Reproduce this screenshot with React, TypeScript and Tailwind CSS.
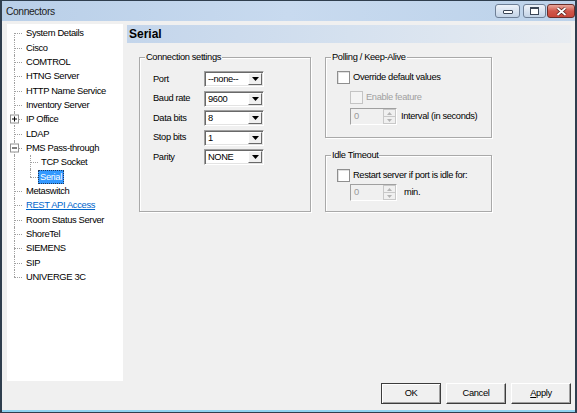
import React from 'react';

const UI = "font-['Liberation_Sans',Arial,sans-serif]";

type Node = {
  label: string;
  child?: boolean;
  box?: '+' | '-';
  selected?: boolean;
  link?: boolean;
};

const tree: Node[] = [
  { label: 'System Details' },
  { label: 'Cisco' },
  { label: 'COMTROL' },
  { label: 'HTNG Server' },
  { label: 'HTTP Name Service' },
  { label: 'Inventory Server' },
  { label: 'IP Office', box: '+' },
  { label: 'LDAP' },
  { label: 'PMS Pass-through', box: '-' },
  { label: 'TCP Socket', child: true },
  { label: 'Serial', child: true, selected: true },
  { label: 'Metaswitch' },
  { label: 'REST API Access', link: true },
  { label: 'Room Status Server' },
  { label: 'ShoreTel' },
  { label: 'SIEMENS' },
  { label: 'SIP' },
  { label: 'UNIVERGE 3C' },
];

const TreeRow: React.FC<{ node: Node; first: boolean; last: boolean; lastChild: boolean }> = ({
  node,
  first,
  last,
  lastChild,
}) => (
  <div className="relative h-[14.35px] flex items-center">
    {/* root level line */}
    <span
      className={`absolute left-[7px] border-l border-dotted border-[#a0a0a0] ${
        first ? 'top-1/2 bottom-0' : last ? 'top-0 h-1/2' : 'top-0 bottom-0'
      }`}
    />
    {node.child ? (
      <>
        <span
          className={`absolute left-[23px] border-l border-dotted border-[#a0a0a0] ${
            lastChild ? 'top-0 h-1/2' : 'top-0 bottom-0'
          }`}
        />
        <span className="absolute left-[23px] top-1/2 w-[8px] border-t border-dotted border-[#a0a0a0]" />
      </>
    ) : (
      <span className="absolute left-[7px] top-1/2 w-[8px] border-t border-dotted border-[#a0a0a0]" />
    )}
    {node.box && (
      <span className="absolute left-[3px] top-1/2 -translate-y-1/2 w-[9px] h-[9px] border border-[#919191] bg-white">
        <span className="absolute left-[1px] top-[3px] w-[5px] h-[1px] bg-black" />
        {node.box === '+' && <span className="absolute left-[3px] top-[1px] w-[1px] h-[5px] bg-black" />}
      </span>
    )}
    <span
      className={`absolute whitespace-nowrap leading-[12px] ${
        node.child ? 'left-[31px]' : 'left-[16px]'
      } ${
        node.selected
          ? 'bg-[#3399ff] text-white px-[1px] border border-dotted border-[#1f3a60]'
          : node.link
          ? 'text-[#0066cc] underline px-[2px] border border-transparent'
          : 'text-black px-[2px] border border-transparent'
      }`}
    >
      {node.label}
    </span>
  </div>
);

const GroupBox: React.FC<{ label: string; className: string; children?: React.ReactNode }> = ({
  label,
  className,
  children,
}) => (
  <div
    className={`relative border border-[#a9a9a9] shadow-[inset_1px_1px_0_#ffffff,1px_1px_0_#ffffff] ${className}`}
  >
    <span className="absolute -top-[7px] left-[5px] px-[1px] bg-[#f0f0f0] leading-[13px] whitespace-nowrap">
      {label}
    </span>
    {children}
  </div>
);

const Select: React.FC<{ value: string }> = ({ value }) => (
  <div className="w-[60px] h-[16px] flex bg-white border border-t-[#a0a0a0] border-l-[#a0a0a0] border-b-white border-r-white shadow-[inset_1px_1px_0_#696969,inset_-1px_-1px_0_#e3e3e3]">
    <span className="flex-1 pl-[3px] pt-[1px] leading-[13px]">{value}</span>
    <span className="w-[14px] mt-[1px] mr-[1px] mb-[1px] flex items-center justify-center bg-[#f0f0f0] border border-t-white border-l-white border-b-[#696969] border-r-[#696969]">
      <svg width="7" height="4" viewBox="0 0 7 4">
        <path d="M0 0h7L3.5 4z" fill="#000" />
      </svg>
    </span>
  </div>
);

const Checkbox: React.FC<{ disabled?: boolean }> = ({ disabled }) => (
  <span
    className={`w-[13px] h-[13px] shrink-0 border ${
      disabled
        ? 'border-[#c4c4c4] bg-[#f4f4f4]'
        : 'border-[#8f8f8f] bg-white shadow-[inset_1px_1px_0_#e0e0e0]'
    }`}
  />
);

const Spinner: React.FC = () => (
  <div className="w-[47px] h-[17px] flex border border-t-[#a0a0a0] border-l-[#a0a0a0] border-b-white border-r-white shadow-[inset_1px_1px_0_#c8c8c8]">
    <span className="flex-1 pl-[3px] pt-[1px] leading-[13px] text-[#9a9a9a] bg-[#f0f0f0]">0</span>
    <span className="w-[13px] flex flex-col">
      <span className="flex-1 flex items-center justify-center border border-[#c8c8c8] bg-[#f0f0f0]">
        <svg width="5" height="3" viewBox="0 0 5 3">
          <path d="M2.5 0L5 3H0z" fill="#b4b4b4" />
        </svg>
      </span>
      <span className="flex-1 flex items-center justify-center border border-t-0 border-[#c8c8c8] bg-[#f0f0f0]">
        <svg width="5" height="3" viewBox="0 0 5 3">
          <path d="M0 0h5L2.5 3z" fill="#b4b4b4" />
        </svg>
      </span>
    </span>
  </div>
);

const DlgButton: React.FC<{ children: React.ReactNode; isDefault?: boolean }> = ({ children, isDefault }) => (
  <button
    className={`w-[60px] h-[21px] bg-[#f0f0f0] leading-[13px] ${
      isDefault
        ? 'border border-[#3c3c3c] shadow-[inset_1px_1px_0_#ffffff,inset_-1px_-1px_0_#a0a0a0]'
        : 'border border-t-white border-l-white border-b-[#3c3c3c] border-r-[#3c3c3c] shadow-[inset_-1px_-1px_0_#a0a0a0]'
    }`}
  >
    {children}
  </button>
);

export default function App() {
  return (
    <div
      className={`w-[577px] h-[413px] flex flex-col overflow-hidden bg-[#f0f0f0] border-t border-x-2 border-[#2f3e4e] text-[9.3px] tracking-[-0.35px] text-black ${UI}`}
    >
      {/* title bar */}
      <div className="h-[20px] shrink-0 flex items-start bg-gradient-to-r from-[#b9cfe8] via-[#c8daef] to-[#bcd2ea] pl-[4px]">
        <span className="mt-[4px] text-[10.3px] tracking-[-0.4px] leading-[13px] text-[#1c1c1c]">Connectors</span>
        <div className="ml-auto mt-[3px] flex">
          <span className="w-[25px] h-[14px] rounded-[3px] border border-[#6e7f96] bg-gradient-to-b from-[#eef3fa] to-[#c3d3e6] flex items-end justify-center pb-[3px]">
            <span className="w-[10px] h-[4px] border border-[#3b4656] bg-white rounded-[1px]" />
          </span>
          <span className="ml-[3px] w-[23px] h-[14px] rounded-[3px] border border-[#6e7f96] bg-gradient-to-b from-[#eef3fa] to-[#c3d3e6] flex items-center justify-center">
            <span className="w-[9px] h-[8px] border border-[#3b4656] border-t-2 bg-white" />
          </span>
          <span className="ml-[1px] w-[28px] h-[14px] rounded-[3px] border border-[#6b2d28] bg-gradient-to-b from-[#e7a89d] via-[#d0574b] to-[#c8473a] flex items-center justify-center">
            <svg width="11" height="9" viewBox="0 0 11 9">
              <path d="M1.5 1l8 7M9.5 1l-8 7" stroke="#4a1a16" strokeWidth="3.2" />
              <path d="M1.5 1l8 7M9.5 1l-8 7" stroke="#ffffff" strokeWidth="1.8" />
            </svg>
          </span>
        </div>
      </div>

      {/* body */}
      <div className="flex-1 flex flex-col pl-[5px] pr-[2px] pt-[3px]">
        <div className="h-[357px] flex gap-[4px]">
          {/* tree */}
          <div className="w-[116px] h-full bg-white pt-[2px] text-[9.4px]">
            {tree.map((n, i) => (
              <TreeRow
                key={n.label}
                node={n}
                first={i === 0}
                last={i === tree.length - 1}
                lastChild={n.label === 'Serial'}
              />
            ))}
          </div>

          {/* settings page */}
          <div className="w-[444px] mt-[1px] flex flex-col">
            <div className="h-[18px] bg-gradient-to-r from-[#c3d5eb] via-[#d5e1ef] to-[#e8ecf1] pl-[2px] font-bold text-[12px] tracking-normal leading-[18px]">
              Serial
            </div>
            <div className="flex pl-[12px] pt-[14px] gap-[14px]">
              <GroupBox label="Connection settings" className="w-[172px] h-[155px] pt-[13px] pl-[13px]">
                <div className="flex flex-col gap-[3.5px]">
                  {[
                    ['Port', '--none--'],
                    ['Baud rate', '9600'],
                    ['Data bits', '8'],
                    ['Stop bits', '1'],
                    ['Parity', 'NONE'],
                  ].map(([label, value]) => (
                    <div key={label} className="h-[16px] flex items-center">
                      <span className="w-[51px] leading-[13px]">{label}</span>
                      <Select value={value} />
                    </div>
                  ))}
                </div>
              </GroupBox>

              <div className="flex flex-col gap-[17px]">
                <GroupBox label="Polling / Keep-Alive" className="w-[167px] h-[81px] pt-[13px] pl-[11px]">
                  <div className="flex items-center gap-[3px] h-[13px]">
                    <Checkbox />
                    <span className="leading-[13px]">Override default values</span>
                  </div>
                  <div className="ml-[13px] mt-[7px] flex items-center gap-[3px] h-[13px]">
                    <Checkbox disabled />
                    <span className="leading-[13px] text-[#a0a0a0]">Enable feature</span>
                  </div>
                  <div className="ml-[13px] mt-[4px] flex items-center gap-[4px]">
                    <Spinner />
                    <span className="leading-[13px]">Interval (in seconds)</span>
                  </div>
                </GroupBox>

                <GroupBox label="Idle Timeout" className="w-[167px] h-[57px] pt-[13px] pl-[11px]">
                  <div className="flex items-center gap-[3px] h-[13px]">
                    <Checkbox />
                    <span className="leading-[13px]">Restart server if port is idle for:</span>
                  </div>
                  <div className="ml-[13px] mt-[2px] flex items-center gap-[7px]">
                    <Spinner />
                    <span className="leading-[13px]">min.</span>
                  </div>
                </GroupBox>
              </div>
            </div>
          </div>
        </div>

        {/* dialog buttons */}
        <div className="mt-[2px] flex justify-end gap-[5px] pr-[2px]">
          <DlgButton isDefault>OK</DlgButton>
          <DlgButton>Cancel</DlgButton>
          <DlgButton>
            <span className="underline">A</span>pply
          </DlgButton>
        </div>
      </div>

      {/* bottom frame */}
      <div className="h-[2px] shrink-0 bg-[#8fd3f0]" />
      <div className="h-[1px] shrink-0 bg-[#2f3e4e]" />
    </div>
  );
}
